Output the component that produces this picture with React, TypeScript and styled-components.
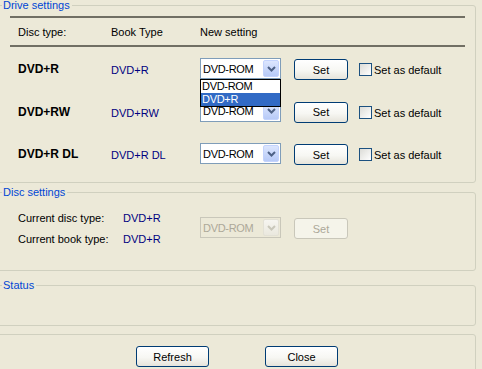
import React from 'react';
import styled, { createGlobalStyle } from 'styled-components';

const GlobalStyle = createGlobalStyle`
  html, body {
    margin: 0;
    padding: 0;
    background: #ECE9D8;
    overflow: hidden;
  }
  body {
    font-family: "Liberation Sans", Arial, sans-serif;
    font-size: 11px;
    color: #000;
  }
`;

const Window = styled.div`
  position: relative;
  width: 482px;
  height: 369px;
  overflow: hidden;
  background: #ECE9D8;
`;

/* XP style group box, its left edge sits just off the picture */
const Group = styled.fieldset<{ $height: number; $gap: number }>`
  box-sizing: border-box;
  width: 482px;
  height: ${(p) => p.$height}px;
  margin: ${(p) => p.$gap}px 0 0 -6px;
  padding: 0;
  min-width: 0;
  border: 1px solid #D0D0BF;
  border-radius: 3px;
`;

const Legend = styled.legend`
  margin-left: 7px;
  padding: 0 2px 0 1px;
  font-size: 11px;
  line-height: 11px;
  color: #0046D5;
`;

const Rule = styled.div<{ $top: number }>`
  margin: ${(p) => p.$top}px 0 0 15px;
  width: 455px;
  height: 2px;
  background: #716F64;
`;

const HeaderRow = styled.div`
  box-sizing: border-box;
  height: 27px;
  padding: 8px 0 0 23px;
  display: grid;
  grid-template-columns: 93px 89px 94px;
  line-height: 13px;
`;

const DriveRows = styled.div`
  display: flex;
  flex-direction: column;
  gap: 21.5px;
  padding: 11px 0 0 23px;
`;

const DriveRow = styled.div`
  display: grid;
  grid-template-columns: 93px 89px 94px 65px 13px auto;
  align-items: start;
  height: 21px;
`;

const DiscName = styled.div`
  font-size: 12px;
  font-weight: bold;
  line-height: 21px;
  padding-top: 1px;
`;

const BookValue = styled.div`
  color: #000080;
  line-height: 21px;
  padding-top: 2px;
`;

const ComboWrap = styled.div`
  position: relative;
  width: 81px;
`;

const Combo = styled.div<{ $disabled?: boolean }>`
  box-sizing: border-box;
  width: 81px;
  height: 21px;
  display: flex;
  align-items: center;
  border: 1px solid ${(p) => (p.$disabled ? '#C9C7BA' : '#7F9DB9')};
  background: ${(p) => (p.$disabled ? '#ECE9D8' : '#FFFFFF')};
  color: ${(p) => (p.$disabled ? '#ACA899' : '#000')};
`;

const ComboText = styled.span`
  flex: 1;
  padding: 1px 0 0 2px;
  line-height: 17px;
  letter-spacing: -0.3px;
`;

const ComboArrow = styled.span<{ $disabled?: boolean }>`
  box-sizing: border-box;
  flex: none;
  width: 16px;
  height: 17px;
  margin-right: 1px;
  display: flex;
  align-items: center;
  justify-content: center;
  border: 1px solid ${(p) => (p.$disabled ? '#E3E1D6' : '#C3D3FD')};
  border-radius: 2px;
  background: ${(p) =>
    p.$disabled
      ? 'linear-gradient(#F6F5F0, #EAE8DE)'
      : 'linear-gradient(#DCE6FE, #B7CAF7)'};
`;

const DropList = styled.div`
  position: absolute;
  top: 21px;
  left: 0;
  z-index: 2;
  box-sizing: border-box;
  width: 81px;
  border: 1px solid #000;
  background: #fff;
`;

const DropItem = styled.div<{ $selected?: boolean }>`
  height: 13px;
  line-height: 13px;
  padding-left: 1px;
  letter-spacing: -0.3px;
  background: ${(p) => (p.$selected ? '#316AC5' : '#fff')};
  color: ${(p) => (p.$selected ? '#fff' : '#000')};
`;

const XPButton = styled.button<{ $width: number }>`
  box-sizing: border-box;
  width: ${(p) => p.$width}px;
  height: 21px;
  margin: 1px 0 0;
  padding: 0;
  border: 1px solid #003C74;
  border-radius: 3px;
  background: linear-gradient(#FFFFFF, #F7F7F3 55%, #E6E4DB);
  font-family: "Liberation Sans", Arial, sans-serif;
  font-size: 11px;
  color: #000;

  &:disabled {
    border-color: #C9C7BA;
    background: #F5F4EA;
    color: #ACA899;
  }
`;

const Check = styled.span`
  box-sizing: border-box;
  display: block;
  width: 13px;
  height: 13px;
  margin-top: 5px;
  border: 1px solid #1C5180;
  background: linear-gradient(135deg, #DCDCD7, #FFFFFF);
`;

const CheckLabel = styled.span`
  margin-left: 2px;
  line-height: 21px;
  padding-top: 2px;
`;

const DiscGrid = styled.div`
  display: grid;
  grid-template-columns: 105px 77px 94px 54px;
  grid-template-rows: 21px 21px;
  padding: 10px 0 0 23px;
  line-height: 21px;
`;

const DiscValue = styled.span`
  color: #000080;
`;

const GridCell = styled.div<{ $top: number; $col: number }>`
  grid-column: ${(p) => p.$col};
  grid-row: 1 / span 2;
  align-self: start;
  margin-top: ${(p) => p.$top}px;
`;

const Panel = styled.div`
  box-sizing: border-box;
  width: 482px;
  height: 60px;
  margin: 8px 0 0 -6px;
  padding: 10px 0 0 141px;
  display: flex;
  gap: 56px;
  border: 1px solid #D0D0BF;
  border-radius: 3px;
`;

const Chevron = ({ color }: { color: string }) => (
  <svg width="9" height="6" viewBox="0 0 9 6">
    <path d="M1 1 L4.5 4.5 L8 1" fill="none" stroke={color} strokeWidth="2" />
  </svg>
);

const ComboBox = ({ value, disabled }: { value: string; disabled?: boolean }) => (
  <Combo $disabled={disabled}>
    <ComboText>{value}</ComboText>
    <ComboArrow $disabled={disabled}>
      <Chevron color={disabled ? '#C9C7BA' : '#4D6185'} />
    </ComboArrow>
  </Combo>
);

const drives = [
  { name: 'DVD+R', book: 'DVD+R', open: true },
  { name: 'DVD+RW', book: 'DVD+RW', open: false },
  { name: 'DVD+R DL', book: 'DVD+R DL', open: false },
];

export default function App() {
  return (
    <Window>
      <GlobalStyle />
      <Group $height={183} $gap={0}>
        <Legend>Drive settings</Legend>
        <Rule $top={5} />
        <HeaderRow>
          <span>Disc type:</span>
          <span>Book Type</span>
          <span>New setting</span>
        </HeaderRow>
        <Rule $top={0} />
        <DriveRows>
          {drives.map((d) => (
            <DriveRow key={d.name}>
              <DiscName>{d.name}</DiscName>
              <BookValue>{d.book}</BookValue>
              <ComboWrap>
                <ComboBox value="DVD-ROM" />
                {d.open && (
                  <DropList>
                    <DropItem>DVD-ROM</DropItem>
                    <DropItem $selected>DVD+R</DropItem>
                  </DropList>
                )}
              </ComboWrap>
              <XPButton $width={54}>Set</XPButton>
              <Check />
              <CheckLabel>Set as default</CheckLabel>
            </DriveRow>
          ))}
        </DriveRows>
      </Group>

      <Group $height={84} $gap={4}>
        <Legend>Disc settings</Legend>
        <DiscGrid>
          <span>Current disc type:</span>
          <DiscValue>DVD+R</DiscValue>
          <GridCell $top={9} $col={3}>
            <ComboBox value="DVD-ROM" disabled />
          </GridCell>
          <GridCell $top={9} $col={4}>
            <XPButton $width={54} disabled>
              Set
            </XPButton>
          </GridCell>
          <span>Current book type:</span>
          <DiscValue>DVD+R</DiscValue>
        </DiscGrid>
      </Group>

      <Group $height={46} $gap={9}>
        <Legend>Status</Legend>
      </Group>

      <Panel>
        <XPButton $width={73}>Refresh</XPButton>
        <XPButton $width={73}>Close</XPButton>
      </Panel>
    </Window>
  );
}
